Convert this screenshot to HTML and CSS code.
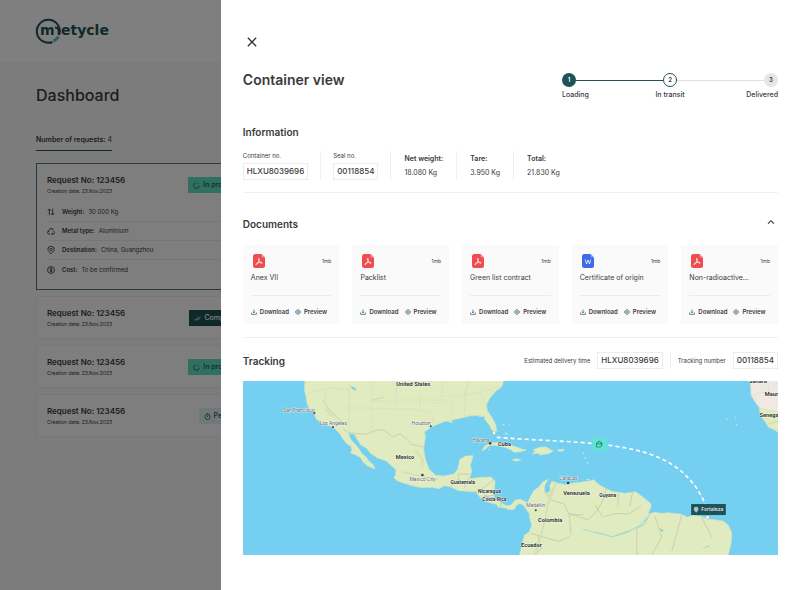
FILE: index.html
```html
<!DOCTYPE html>
<html lang="en">
<head>
  <meta charset="UTF-8" />
  <meta name="viewport" content="width=device-width, initial-scale=1.0" />
  <title>Metycle - Container view</title>
  <link rel="stylesheet" href="styles.css">
</head>
<body>

  <!-- icons used more than once -->
  <svg class="sprite" aria-hidden="true">
    <symbol id="icon-progress" viewBox="0 0 12 12">
      <path d="M4.500 1.400A4.800 4.800 0 1 0 10.800 6.500M8 1.600a4.800 4.800 0 0 1 2 1.800" />
    </symbol>
    <symbol id="icon-download" viewBox="0 0 12 12">
      <path d="M6 1v6.500M3.800 5.500 6 7.700l2.200-2.200M1.200 7v3.800h9.600V7" />
    </symbol>
    <symbol id="icon-eye" viewBox="0 0 12 12">
      <path d="M.8 6C2.300 3 4 1.500 6 1.500S9.700 3 11.200 6C9.700 9 8 10.500 6 10.500S2.300 9 .8 6z" />
      <circle cx="6" cy="6" r="2" />
    </symbol>
    <symbol id="icon-pdf" viewBox="0 0 24 28">
      <path fill="#ef4b50" d="M5 0h12l7 7v16a5 5 0 0 1-5 5H5a5 5 0 0 1-5-5V5a5 5 0 0 1 5-5z" />
      <path fill="#f58b8e" d="M17 0l7 7h-5a2 2 0 0 1-2-2z" />
      <path fill="none" stroke="#fff" stroke-width="1.500" stroke-linejoin="round" d="M11.500 8.500c2 0 .8 5.500-1 8.500-1.500 2.800-4 5-4.800 4-1-1.500 3.500-3.700 7-4.300 3-.5 6 0 5.800 1.300-.3 1.600-4-.3-5.700-2.800-1.400-2.200-2.600-6.700-1.300-6.700z" />
    </symbol>
    <symbol id="icon-word" viewBox="0 0 24 28">
      <path fill="#3f69e6" d="M5 0h12l7 7v16a5 5 0 0 1-5 5H5a5 5 0 0 1-5-5V5a5 5 0 0 1 5-5z" />
      <path fill="#7f9bf0" d="M17 0l7 7h-5a2 2 0 0 1-2-2z" />
      <path fill="none" stroke="#fff" stroke-width="1.500" d="M6.500 11l2.500 9 3-8 3 8 2.500-9" />
    </symbol>
  </svg>

  <div class="page">
    <header class="topbar">
      <svg class="logo" viewBox="0 0 74 26" role="img" aria-label="metycle">
        <path class="logo-ring" d="M24.200 17A11.500 11.500 0 1 0 17.500 24" />
        <path class="logo-ring" d="M20 9.500c2.500 0 3.700 1 3.700 3.500v4" />
        <path class="logo-accent" d="M23.500 18.500a11.500 11.500 0 0 1-5 4.700" />
        <text x="5" y="17">m</text>
        <text x="26" y="17">etycle</text>
      </svg>
    </header>

    <main class="dashboard">
      <h1>Dashboard</h1>
      <p class="request-count"><b>Number of requests:</b> 4</p>

      <div class="request-list">
        <article class="request active">
          <div class="request-head">
            <div>
              <h2>Request No: 123456</h2>
              <p>Creation date: 23.Nov.2023</p>
            </div>
            <span class="badge progress"><svg class="icon"><use href="#icon-progress" /></svg>In progress</span>
          </div>
          <ul class="request-details">
            <li>
              <svg class="icon" viewBox="0 0 12 12"><path d="M3.500 11V1.500M1.200 4l2.300-2.500L5.800 4M8.500 1v9.500M6.200 8l2.300 2.500L10.800 8" /></svg>
              <b>Weight:</b> 30 000 Kg
            </li>
            <li>
              <svg class="icon" viewBox="0 0 12 12"><path d="M3.500 4.500 5 1.800h2L8.500 4M9.300 2.500 8.700 4.300 7 3.900M9.800 6l1.400 2.500-1 2H7.200M8.400 9.200 7 10.500l1.400 1.300M4.800 10.500h-3l-1-2L2.500 5.500M.8 6l1.800-.6.6 1.800" /></svg>
              <b>Metal type:</b> Aluminium
            </li>
            <li>
              <svg class="icon" viewBox="0 0 12 12"><path d="M6 11.400C3 9 1.300 7.200 1.300 5a4.700 4.700 0 0 1 9.400 0c0 2.200-1.700 4-4.700 6.400z" /><circle cx="6" cy="5.200" r="1.800" /></svg>
              <b>Destination:</b> China, Guangzhou
            </li>
            <li>
              <svg class="icon" viewBox="0 0 12 12"><circle cx="6" cy="6" r="5.200" /><path d="M7.800 4.200C7 3.200 4.300 3.300 4.300 4.700c0 1.600 3.500.9 3.500 2.600 0 1.500-2.900 1.500-3.700.4M6 2.500v7" /></svg>
              <b>Cost:</b> To be confirmed
            </li>
          </ul>
        </article>

        <article class="request">
          <div class="request-head">
            <div>
              <h2>Request No: 123456</h2>
              <p>Creation date: 23.Nov.2023</p>
            </div>
            <span class="badge completed"><svg class="icon" viewBox="0 0 12 12"><path d="M.5 6.500 3 9l5-6M5.500 8.500 6.300 9l5.200-6" /></svg>Completed</span>
          </div>
        </article>

        <article class="request">
          <div class="request-head">
            <div>
              <h2>Request No: 123456</h2>
              <p>Creation date: 23.Nov.2023</p>
            </div>
            <span class="badge progress"><svg class="icon"><use href="#icon-progress" /></svg>In progress</span>
          </div>
        </article>

        <article class="request">
          <div class="request-head">
            <div>
              <h2>Request No: 123456</h2>
              <p>Creation date: 23.Nov.2023</p>
            </div>
            <span class="badge pending"><svg class="icon" viewBox="0 0 12 12"><circle cx="6" cy="7" r="4.300" /><path d="M6 4.500V7M4.500.8h3M9.500 2.500l1 1" /></svg>Pending</span>
          </div>
        </article>
      </div>
    </main>
  </div>

  <div class="overlay"></div>

  <aside class="drawer">
    <button class="close" type="button" aria-label="Close">
      <svg viewBox="0 0 12 12"><path d="M1 1l10 10M11 1L1 11" /></svg>
    </button>

    <div class="drawer-head">
      <h1>Container view</h1>
      <ol class="steps">
        <li class="done"><span class="dot">1</span><span class="step-name">Loading</span></li>
        <li class="current"><span class="dot">2</span><span class="step-name">In transit</span></li>
        <li><span class="dot">3</span><span class="step-name">Delivered</span></li>
      </ol>
    </div>

    <section class="information">
      <h2>Information</h2>
      <dl class="facts">
        <div class="boxed"><dt>Container no.</dt><dd class="box">HLXU8039696</dd></div>
        <div class="boxed"><dt>Seal no.</dt><dd class="box">00118854</dd></div>
        <div><dt>Net weight:</dt><dd>18.080 Kg</dd></div>
        <div><dt>Tare:</dt><dd>3.950 Kg</dd></div>
        <div><dt>Total:</dt><dd>21.830 Kg</dd></div>
      </dl>
    </section>

    <section class="documents">
      <div class="section-head">
        <h2>Documents</h2>
        <button class="collapse" type="button" aria-label="Collapse documents">
          <svg viewBox="0 0 12 8"><path d="M1.500 6.500 6 2l4.500 4.500" /></svg>
        </button>
      </div>
      <div class="doc-grid">
        <article class="doc">
          <div class="doc-top"><svg class="file"><use href="#icon-pdf" /></svg><span>1mb</span></div>
          <h3>Anex VII</h3>
          <div class="doc-actions">
            <button type="button"><svg class="icon"><use href="#icon-download" /></svg>Download</button>
            <button type="button"><svg class="icon"><use href="#icon-eye" /></svg>Preview</button>
          </div>
        </article>
        <article class="doc">
          <div class="doc-top"><svg class="file"><use href="#icon-pdf" /></svg><span>1mb</span></div>
          <h3>Packlist</h3>
          <div class="doc-actions">
            <button type="button"><svg class="icon"><use href="#icon-download" /></svg>Download</button>
            <button type="button"><svg class="icon"><use href="#icon-eye" /></svg>Preview</button>
          </div>
        </article>
        <article class="doc">
          <div class="doc-top"><svg class="file"><use href="#icon-pdf" /></svg><span>1mb</span></div>
          <h3>Green list contract</h3>
          <div class="doc-actions">
            <button type="button"><svg class="icon"><use href="#icon-download" /></svg>Download</button>
            <button type="button"><svg class="icon"><use href="#icon-eye" /></svg>Preview</button>
          </div>
        </article>
        <article class="doc">
          <div class="doc-top"><svg class="file"><use href="#icon-word" /></svg><span>1mb</span></div>
          <h3>Certificate of origin</h3>
          <div class="doc-actions">
            <button type="button"><svg class="icon"><use href="#icon-download" /></svg>Download</button>
            <button type="button"><svg class="icon"><use href="#icon-eye" /></svg>Preview</button>
          </div>
        </article>
        <article class="doc">
          <div class="doc-top"><svg class="file"><use href="#icon-pdf" /></svg><span>1mb</span></div>
          <h3>Non-radioactive...</h3>
          <div class="doc-actions">
            <button type="button"><svg class="icon"><use href="#icon-download" /></svg>Download</button>
            <button type="button"><svg class="icon"><use href="#icon-eye" /></svg>Preview</button>
          </div>
        </article>
      </div>
    </section>

    <section class="tracking">
      <div class="section-head">
        <h2>Tracking</h2>
        <div class="tracking-info">
          <div><span>Estimated delivery time</span><span class="box">HLXU8039696</span></div>
          <div><span>Tracking number</span><span class="box">00118854</span></div>
        </div>
      </div>

      <svg class="map" viewBox="24 123 1605 522" role="img" aria-label="Route map">
        <rect class="sea" x="24" y="123" width="1605" height="522" />

        <!-- North and Central America -->
        <path class="land" d="M210 120L208 150 213 170 216 190 223 208 238 220 243 236 256 246 270 254 292 260 304 270 316 284 326 300 336 312 347 318 351 330 346 338 362 345 376 352 384 366 398 378 420 387 415 374 402 364 392 350 380 340 372 327 360 312 347 298 340 280 358 283 366 298 378 316 394 324 406 340 428 354 452 362 466 374 483 390 481 406 476 412 486 422 508 430 538 439 562 443 592 442 612 446 628 437 650 442 670 452 700 454 722 455 732 468 746 482 770 490 784 493 790 502 812 504 820 509 837 508 845 495 855 490 867 498 882 520 900 500 877 492 873 486 855 478 840 480 828 495 815 498 800 490 784 480 775 468 778 444 780 424 768 411 738 412 703 416 710 394 706 376 714 347 692 348 674 358 668 388 656 402 626 408 602 406 582 388 571 358 566 330 567 318 571 290 568 276 590 260 614 250 634 243 652 248 650 240 680 234 704 228 726 226 736 230 748 229 750 240 764 256 768 266 776 276 785 274 782 254 770 232 757 212 754 195 764 174 782 154 800 140 806 120z" />
        <!-- South America -->
        <path class="land" d="M867 498L877 488 888 466 896 452 912 440 924 425 938 418 932 434 938 452 946 454 944 438 950 424 970 430 990 434 1010 430 1040 426 1060 424 1076 419 1086 430 1102 440 1130 454 1170 460 1202 455 1222 470 1246 490 1248 500 1238 522 1260 517 1276 520 1300 518 1340 523 1356 532 1372 526 1394 529 1420 537 1442 540 1464 543 1480 556 1490 580 1488 610 1478 650 852 650 862 608 868 585 882 576 890 556 884 535 882 516z" />
        <!-- Caribbean islands -->
        <g class="land" transform="translate(615 120)">
          <path d="M126 212l8-14 15-9 26-2 26 6 26 7 18 7 14 3-18 5-20 2-8-8-22-8-26-5-18 1-14 12zM279 209l20-7 18-1 22 12-14 8-26 4-4-6-18 3 8-8zM353 209l20-1-4 5-14 1zM216 239l14-3 12 4-14 4zM190 160l6 6M145 208l5 2z" />
          <path class="cay" d="M188 133l6 3M196 158l7 6M198 172l4 6M212 172l6 4M205 134l3 2M428 218l3 4M434 232l3 4M441 246l3 4M440 300l8-2" />
        </g>
        <path class="land africa" d="M1545 120L1548 166 1560 186 1575 206 1632 218V120z" />
        <path class="land" d="M1572 204L1576 226 1592 248 1600 262 1620 270 1632 280V216z" />
        <path class="cay" d="M1473 236l4 2M1502 254l5 1M1500 233l2 2" />

        <!-- state and country borders -->
        <g class="borders">
          <path d="M216 161l66-18M268 150l8 60 54 60M342 132v72M282 144l60 6M330 204h80M342 204v70M410 204l2-80M410 182l74 4M484 123v86M412 206h72M410 206v64M484 180h70M484 209l36-4 70 14M554 150v58M554 180h90M590 218l6 36M594 190l60-2M624 123l-6 48 34-8M654 188l-8 50M690 150l-2 82M644 172l90-14 62-20M734 158l24 40M700 123l-10 42M690 228h58M1552 164l50-10 27-30M1602 154l-6-31" />
          <path class="country" d="M326 270l16 8 50 5 34-14 22 2 24 20 24-10 20 18 14 14 36 8M646 440l24-20v-18h36M700 416l-14 30M778 418l-34 26-22 12M776 466l-34 4M800 490l-6 12" />
          <path class="country" d="M936 426l-8 30 20 24 40 12 14 32 6 60M1003 590l-34 14-60-18-22-6M909 586l10 40-24 20M1004 520l54 20 30-30-6-16M1088 510l20-40 6-28M1108 530l36-10 36 2 38-24M1150 460l-2 40M1192 458l-8 40M1104 532l-16-24M1205 560v90M1260 530l20 60-30 55M1340 524l-30 110M1400 532l30 60M1003 524h42" />
        </g>
        <g class="relief">
          <path d="M264 180l20 30 34 34M270 206l22 22M410 180l36-8M540 330l24 30-4 20M500 395l60 14 50 8M956 452l-18 38-8 50-14 50-16 50M940 470l24-40M1640 240l-40 12M792 486l10 12" />
        </g>
        <g class="rivers">
          <path d="M1043 568l40 10 50 12 40-12 40-20 24-26M1110 584l-30-8M1245 520l-20 36-30 10M1190 570l-50 16M1276 567l8 8M1404 625l18-8M348 140l14 10" />
          <path class="lake" d="M346 138l14 6 4 8-12-4zM1272 564l12 6-2 6zM932 430l8 6 2 20-8 4-6-16zM744 462l22 12-6 2z" />
        </g>

        <!-- cities and countries -->
        <g class="places">
          <text x="535" y="137">United States</text>
          <text x="510" y="356">Mexico</text>
          <text class="small" x="683" y="431">Guatemala</text>
          <text class="small" x="763" y="459">Nicaragua</text>
          <text class="small" x="778" y="484">Costa Rica</text>
          <text x="808" y="319">Cuba</text>
          <text x="1024" y="465">Venezuela</text>
          <text class="small" x="1118" y="471">Guyana</text>
          <text x="945" y="547">Colombia</text>
          <text x="889" y="622">Ecuador</text>
          <text x="1280" y="656">Brazil</text>
          <text x="1568" y="128">Sahara</text>
          <text class="start" x="1589" y="168">Maur</text>
          <text class="start" x="1573" y="231">Senega</text>
        </g>
        <g class="cities">
          <text x="192" y="215">San Francisco</text>
          <text x="295" y="254">Los Angeles</text>
          <text x="558" y="255">Houston</text>
          <text x="562" y="423">Mexico City</text>
          <text x="737" y="306">Havana</text>
          <text x="1000" y="421">Caracas</text>
          <text x="902" y="502">Medellín</text>
          <circle cx="238" cy="219" r="3" />
          <circle cx="294" cy="261" r="3" />
          <circle cx="587" cy="259" r="3" />
          <circle cx="562" cy="405" r="4" />
          <circle cx="765" cy="310" r="4" />
          <circle cx="999" cy="429" r="4" />
          <circle cx="902" cy="511" r="3" />
        </g>

        <!-- shipping route -->
        <path class="route" d="M785 292C880 300 990 302 1093 312C1220 328 1350 350 1412 496" />
        <circle class="stop" cx="777" cy="279" r="5" />
        <circle class="stop" cx="1417" cy="532" r="5" />
        <rect class="ship" x="1073" y="294" width="40" height="38" rx="3" />
        <path class="ship-icon" d="M1084 321V308h6v-4h5v4h4v4h-15M1084 321h13l5-9h-6M1099 308v4" />
        <rect class="port" x="1368" y="492" width="104" height="33" />
        <path class="port-pin" d="M1383 518c-5-5-7-7-7-11a7 7 0 0 1 14 0c0 4-2 6-7 11z" />
        <text class="port-name" x="1398" y="514">Fortaleza</text>
      </svg>
    </section>
  </aside>

</body>
</html>
```

FILE: styles.css
```css
* {
  box-sizing: border-box;
}

body {
  margin: 0;
  min-height: 100vh;
  font-family: Inter, "Liberation Sans", sans-serif;
  font-size: 7px;
  line-height: 10px;
  color: #3a3a3a;
  background: #f9f9f9;
}

h1, h2, h3, p, ul, ol, dl, dd {
  margin: 0;
  padding: 0;
}

ul, ol {
  list-style: none;
}

button {
  padding: 0;
  border: none;
  background: none;
  font: inherit;
  color: inherit;
  cursor: pointer;
}

.sprite {
  display: none;
}

.icon {
  width: 7px;
  height: 7px;
  flex-shrink: 0;
  fill: none;
  stroke: currentColor;
  stroke-width: 1.3;
}

/* dashboard behind the drawer */
.topbar {
  height: 62px;
  padding: 18px 35px;
  background: #fff;
}

.logo {
  display: block;
  width: 74px;
  height: 26px;
}

.logo text {
  font: bold 14px "DejaVu Sans", sans-serif;
  fill: #1f5256;
}

.logo-ring {
  fill: none;
  stroke: #1f5256;
  stroke-width: 2;
}

.logo-accent {
  fill: none;
  stroke: #5ec0b0;
  stroke-width: 3;
}

.dashboard {
  padding: 22px 36px;
}

.dashboard h1 {
  font-size: 16px;
  line-height: 22px;
  font-weight: 500;
}

.request-count {
  display: inline-block;
  margin: 29px 0 12px;
  padding-bottom: 5px;
  border-bottom: 1px solid #1f5256;
}

.request-count b {
  font-weight: 600;
}

.request-list {
  display: grid;
  grid-template-columns: 221px;
  gap: 6px;
}

.request {
  padding: 11px 10px 10px;
  border: 1px solid #efefef;
  background: #fdfdfd;
}

.request.active {
  border-color: #4d7679;
}

.request-head {
  display: flex;
  justify-content: space-between;
  align-items: center;
}

.request h2 {
  font-size: 8px;
  line-height: 10px;
  font-weight: 600;
}

.request p {
  padding-top: 2px;
  font-size: 5px;
  line-height: 8px;
}

.badge {
  display: flex;
  align-items: center;
  gap: 3px;
  height: 16px;
  padding: 0 5px;
  font-weight: 500;
}

.badge.progress {
  background: #5ee0c0;
  color: #1f5256;
}

.badge.completed {
  background: #1f5256;
  color: #fff;
}

.badge.pending {
  background: #e3f1f4;
  color: #1f5256;
}

.request-details {
  padding-top: 8px;
}

.request-details li {
  display: flex;
  align-items: center;
  gap: 4px;
  height: 19px;
  font-size: 6px;
  border-bottom: 1px solid #ececec;
}

.request-details li:last-child {
  border-bottom: none;
}

.request-details .icon {
  width: 8px;
  height: 8px;
  margin-right: 3px;
}

.request-details b {
  font-weight: 600;
}

.overlay {
  position: fixed;
  inset: 0;
  background: rgba(0, 0, 0, 0.5);
}

/* drawer */
.drawer {
  position: absolute;
  top: 0;
  right: 0;
  width: 72.4%;
  min-height: 100%;
  padding: 37px 22px 35px;
  background: #fff;
}

.close {
  display: block;
  margin: 0 4px;
}

.close svg {
  display: block;
  width: 10px;
  height: 10px;
}

.close svg,
.collapse svg {
  fill: none;
  stroke: #333;
  stroke-width: 1.6;
}

.drawer-head {
  display: flex;
  justify-content: space-between;
  margin-top: 23px;
}

.drawer-head h1 {
  font-size: 14px;
  line-height: 20px;
  font-weight: 600;
}

.steps {
  display: grid;
  grid-template-columns: repeat(3, 1fr);
  width: 216px;
  padding-top: 3px;
}

.steps li {
  display: grid;
  grid-template-columns: 1fr auto 1fr;
  align-items: center;
  row-gap: 3px;
}

.steps li::before,
.steps li::after {
  content: "";
  grid-row: 1;
  height: 1px;
  background: #e0e0e0;
}

.steps li::before {
  grid-column: 1;
}

.steps li::after {
  grid-column: 3;
}

.steps .dot {
  grid-row: 1;
  grid-column: 2;
  width: 14px;
  height: 14px;
  border-radius: 50%;
  background: #e6e6e6;
  font-size: 6px;
  font-weight: 600;
  line-height: 14px;
  text-align: center;
}

.steps .step-name {
  grid-row: 2;
  grid-column: 1 / 4;
  font-weight: 500;
  text-align: center;
}

.steps li:first-child,
.steps li:last-child {
  grid-template-columns: auto 1fr;
}

.steps li:last-child {
  grid-template-columns: 1fr auto;
}

.steps li:first-child::before,
.steps li:last-child::after {
  display: none;
}

.steps li:first-child .dot {
  grid-column: 1;
}

.steps li:first-child::after {
  grid-column: 2;
}

.steps li:first-child .step-name {
  grid-column: 1 / 3;
  text-align: left;
}

.steps li:last-child .step-name {
  grid-column: 1 / 3;
  text-align: right;
}

.steps .done::after,
.steps .current::before {
  background: #1f5256;
}

.steps .done .dot {
  background: #1f5256;
  color: #fff;
}

.steps .current .dot {
  border: 1px solid #1f5256;
  background: #fff;
  line-height: 12px;
}

.drawer h2 {
  font-size: 10px;
  line-height: 14px;
  font-weight: 600;
}

.information {
  margin-top: 25px;
  padding-bottom: 12px;
  border-bottom: 1px solid #f0f0f0;
}

.facts {
  display: flex;
  margin-top: 12px;
}

.facts div {
  padding: 3px 13px 0;
  border-left: 1px solid #f0f0f0;
}

.facts div:first-child {
  padding-left: 0;
  border-left: none;
}

.facts dt {
  font-weight: 600;
}

.facts dd {
  margin-top: 4px;
}

.facts .boxed {
  padding: 0 12px;
}

.facts .boxed dt {
  font-size: 6px;
  font-weight: 400;
}

.box,
.facts .box {
  display: block;
  margin-top: 2px;
  padding: 0 3px;
  border: 1px solid #ececec;
  font-size: 8px;
  line-height: 15px;
  font-weight: 500;
}

.section-head {
  display: flex;
  justify-content: space-between;
  align-items: center;
}

.documents {
  padding: 24px 0 13px;
  border-bottom: 1px solid #f0f0f0;
}

.collapse {
  padding: 0 3px 4px;
}

.collapse svg {
  display: block;
  width: 8px;
  height: 6px;
}

.doc-grid {
  display: grid;
  grid-template-columns: repeat(5, 1fr);
  gap: 13px;
  margin-top: 14px;
}

.doc {
  padding: 9px 8px 7px;
  background: #fafafa;
}

.doc-top {
  display: flex;
  justify-content: space-between;
  align-items: center;
  padding-left: 2px;
  font-size: 5px;
}

.file {
  width: 12px;
  height: 14px;
}

.doc h3 {
  padding: 5px 0 12px;
  border-bottom: 1px solid #ececec;
  font-size: 7px;
  line-height: 10px;
  font-weight: 400;
}

.doc-actions {
  display: flex;
  gap: 6px;
  padding-top: 11px;
}

.doc-actions button {
  display: flex;
  align-items: center;
  gap: 3px;
  font-size: 6px;
  font-weight: 600;
}

.doc-actions .icon {
  width: 6px;
  height: 6px;
  color: #1f5256;
}

.tracking .section-head {
  padding: 14px 0 12px;
}

.tracking-info {
  display: flex;
  font-size: 6px;
}

.tracking-info div {
  display: flex;
  align-items: center;
  gap: 7px;
}

.tracking-info div + div {
  margin-left: 7px;
  padding-left: 7px;
  border-left: 1px solid #f0f0f0;
}

.tracking-info .box {
  margin-top: 0;
}

/* map */
.map {
  display: block;
  width: 100%;
  font-family: Roboto, sans-serif;
}

.sea {
  fill: #75cff0;
}

.land {
  fill: #e0ebbf;
  stroke: #cfe6c4;
  stroke-width: 2;
  stroke-linejoin: round;
}

.africa {
  fill: #f0e9e3;
}

.cay {
  fill: none;
  stroke: #d9eedd;
  stroke-width: 3;
}

.borders,
.relief,
.rivers {
  fill: none;
  stroke: #cfd0b4;
  stroke-width: 1;
}

.borders .country {
  stroke: #bfc3a6;
  stroke-width: 2;
}

.relief {
  stroke: #d6dbad;
  stroke-width: 4;
}

.rivers {
  stroke: #a5d8d4;
  stroke-width: 3;
}

.rivers .lake {
  fill: #75cff0;
  stroke: none;
}

.places text,
.cities text {
  font-size: 17px;
  font-weight: 700;
  text-anchor: middle;
  fill: #2f3330;
  stroke: #fff;
  stroke-width: 2;
  paint-order: stroke;
}

.places .small {
  font-size: 15px;
}

.places .start {
  text-anchor: start;
}

.cities text {
  font-size: 15px;
  font-weight: 400;
  fill: #555d66;
}

.cities circle {
  fill: #3c4248;
}

.route {
  fill: none;
  stroke: #fff;
  stroke-width: 5;
  stroke-dasharray: 12 9;
}

.stop {
  fill: #fff;
  stroke: #8a9a96;
  stroke-width: 1;
}

.ship {
  fill: #5ee6cf;
}

.ship-icon {
  fill: none;
  stroke: #1f6f62;
  stroke-width: 2;
}

.port {
  fill: #1f5256;
}

.port-pin {
  fill: #a9c4c4;
}

.port-name {
  font: 500 15px Inter, sans-serif;
  fill: #e6efef;
}
```
